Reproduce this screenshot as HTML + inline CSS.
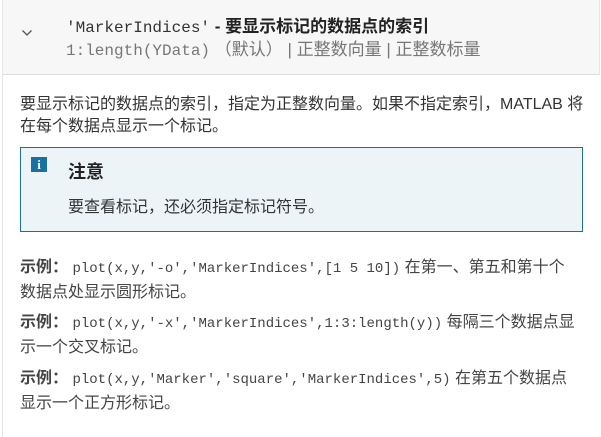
<!DOCTYPE html>
<html><head><meta charset="utf-8"><style>
body{margin:0;width:601px;height:437px;background:#fff;font-family:"Liberation Sans","Noto Sans CJK SC",sans-serif;color:#333;position:relative;overflow:hidden}
.lb{position:absolute;left:2px;top:0;width:1px;height:437px;background:#e6e6e6}
.hdr{position:absolute;left:3px;top:0;width:596px;height:74px;background:#f7f7f7;border-bottom:1px solid #ddd;border-right:1px solid #e6e6e6}
.abs{position:absolute;white-space:nowrap}
code,.m{font-family:"Liberation Mono","Noto Sans CJK SC",monospace}
.ex{position:absolute;left:20px;width:580px;font-size:16px;line-height:23px;color:#444;white-space:nowrap}
</style></head><body>
<div class="lb"></div>
<div class="hdr"></div>
<svg class="abs" style="left:21px;top:29px" width="12" height="8"><path d="M1.5 1.5L6 6 10.5 1.5" stroke="#555" stroke-width="1.3" fill="none"/></svg>
<div class="abs" style="left:66px;top:16px;font-size:17px;line-height:22px;font-weight:bold;color:#222"><span class="m" style="font-weight:normal;color:#333;font-size:16px">'MarkerIndices'</span> - 要显示标记的数据点的索引</div>
<div class="abs" style="left:66px;top:39px;font-size:17px;line-height:22px;color:#777"><span class="m" style="font-size:16px">1:length(YData)</span> （默认） | 正整数向量 | 正整数标量</div>
<div class="abs" style="left:20px;top:94px;font-size:16px;line-height:22px;color:#333">要显示标记的数据点的索引，指定为正整数向量。如果不指定索引，MATLAB 将<br>在每个数据点显示一个标记。</div>
<div class="abs" style="left:20px;top:147px;width:561px;height:83px;background:#edf4f8;border:1px solid #1d6f97"></div>
<div class="abs" style="left:31px;top:157px;width:16px;height:15px;background:#1a70a3;color:#fff;font-size:13px;font-weight:bold;text-align:center;line-height:15px;font-family:'Liberation Serif',serif">i</div>
<div class="abs" style="left:68px;top:161px;font-size:18px;line-height:22px;font-weight:bold;color:#222">注意</div>
<div class="abs" style="left:68px;top:197px;font-size:16px;line-height:22px;color:#333">要查看标记，还必须指定标记符号。</div>
<div class="ex" style="top:256px"><b>示例：</b> <code style="font-size:14px">plot(x,y,'-o','MarkerIndices',[1 5 10])</code> 在第一、第五和第十个<br>数据点处显示圆形标记。</div>
<div class="ex" style="top:311px"><b>示例：</b> <code style="font-size:14px">plot(x,y,'-x','MarkerIndices',1:3:length(y))</code> 每隔三个数据点显<br>示一个交叉标记。</div>
<div class="ex" style="top:367px"><b>示例：</b> <code style="font-size:14px">plot(x,y,'Marker','square','MarkerIndices',5)</code> 在第五个数据点<br>显示一个正方形标记。</div>
</body></html>
